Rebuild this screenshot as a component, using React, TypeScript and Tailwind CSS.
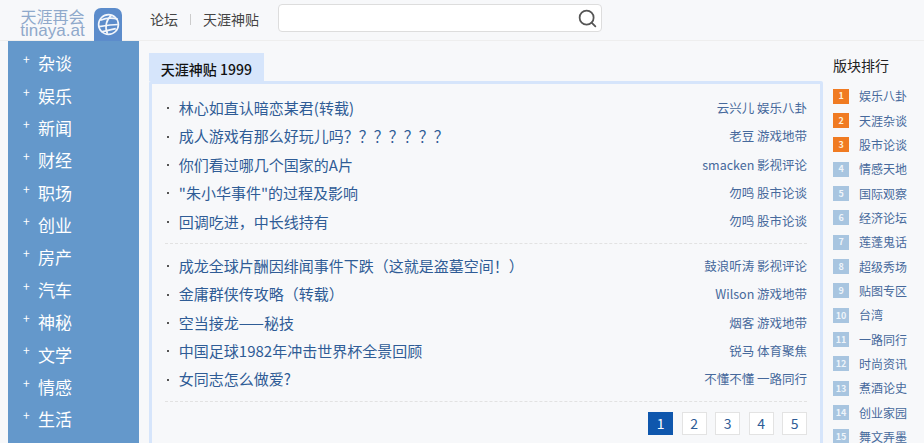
import { Search } from "lucide-react";

const cjk = { fontFamily: '"Noto Sans CJK SC", "Noto Sans", sans-serif' };

const categories = ["杂谈", "娱乐", "新闻", "财经", "职场", "创业", "房产", "汽车", "神秘", "文学", "情感", "生活"];

const topPosts = [
  ["林心如直认暗恋某君(转载)", "云兴儿 娱乐八卦"],
  ["成人游戏有那么好玩儿吗？？？？？？？", "老豆 游戏地带"],
  ["你们看过哪几个国家的A片", "smacken 影视评论"],
  ['"朱小华事件"的过程及影响', "勿鸣 股市论谈"],
  ["回调吃进，中长线持有", "勿鸣 股市论谈"],
];

const bottomPosts = [
  ["成龙全球片酬因绯闻事件下跌（这就是盗墓空间！）", "鼓浪听涛 影视评论"],
  ["金庸群侠传攻略（转载）", "Wilson 游戏地带"],
  ["空当接龙——秘技", "烟客 游戏地带"],
  ["中国足球1982年冲击世界杯全景回顾", "锐马 体育聚焦"],
  ["女同志怎么做爱?", "不懂不懂 一路同行"],
];

const boards = [
  "娱乐八卦", "天涯杂谈", "股市论谈", "情感天地", "国际观察",
  "经济论坛", "莲蓬鬼话", "超级秀场", "贴图专区", "台湾",
  "一路同行", "时尚资讯", "煮酒论史", "创业家园", "舞文弄墨",
];

function PostRow({ title, meta }: { title: string; meta: string }) {
  return (
    <div className="flex h-[28.4px] items-center justify-between">
      <div className="flex items-center">
        <span className="ml-[2px] mr-[10px] h-[2px] w-[2px] bg-[#555]" />
        <span className="text-[15px] text-[#2f5c96]">{title}</span>
      </div>
      <span className="text-[12.5px] text-[#46699c]">{meta}</span>
    </div>
  );
}

export default function App() {
  return (
    <div className="h-[443px] w-[924px] overflow-hidden bg-[#f7f8fa]" style={cjk}>
      {/* top bar */}
      <header className="flex h-[41px] items-start border-b border-[#eeeeee]">
        <div className="ml-[20px] mt-[7px] flex w-[65px] flex-col items-center leading-none text-[#8fa9cb]">
          <span className="text-[16px] leading-[19px]">天涯再会</span>
          <span className="mt-[-3px] text-[17px] leading-[15px]" style={{ fontFamily: '"Liberation Sans", sans-serif' }}>
            tinaya.at
          </span>
        </div>
        <div className="ml-[9px] mt-[8px] flex h-[33px] w-[28px] items-center justify-center rounded-t-[7px] bg-[#5c8ccb]">
          <svg viewBox="0 0 24 24" className="h-[25px] w-[25px]" fill="none" stroke="#f3f6fb" strokeWidth="1.6">
            <circle cx="12" cy="12" r="9.5" />
            <path d="M4 8c5-2 11-3 17-1M3 14c6-1 12-2 18-2M5 19c5-1 10-2 14-3" />
            <path d="M15 3c-5 4-7 11-4 18" />
          </svg>
        </div>
        <nav className="ml-[28px] mt-[9px] flex items-center text-[14px] leading-[20px] text-[#444]">
          <span>论坛</span>
          <span className="mx-[12px] h-[11px] w-px bg-[#ccc]" />
          <span>天涯神贴</span>
        </nav>
        <div className="ml-[19px] mt-[4px] flex h-[28px] w-[324px] items-center justify-end rounded-[4px] border border-[#dddddd] bg-white pr-[3px]">
          <Search size={21} strokeWidth={2} className="text-[#555]" />
        </div>
      </header>

      <div className="flex pl-[8px]">
        {/* left categories */}
        <aside className="h-[402px] w-[131px] bg-[#6498cb] pt-[6px]">
          {categories.map((name) => (
            <div key={name} className="flex h-[32.35px] items-center text-white">
              <span className="ml-[15px] mt-[-8px] w-[15px] text-[12px] leading-none">+</span>
              <span className="text-[17px]">{name}</span>
            </div>
          ))}
        </aside>

        {/* post list */}
        <main className="ml-[10px] mt-[12px] w-[675px]">
          <div className="flex h-[28px] w-[115px] items-center justify-center bg-[#d6e5fb] pt-[4px] text-[14px] font-medium text-[#111]">
            天涯神贴 1999
          </div>
          <div className="h-[400px] rounded-[2px] border-[3px] border-[#d6e5fb] px-[13px] pt-[10px]">
            <div className="border-b border-dashed border-[#e2e2e2] pb-[7px]">
              {topPosts.map(([title, meta]) => (
                <PostRow key={title} title={title} meta={meta} />
              ))}
            </div>
            <div className="border-b border-dashed border-[#e2e2e2] pb-[7px] pt-[8px]">
              {bottomPosts.map(([title, meta]) => (
                <PostRow key={title} title={title} meta={meta} />
              ))}
            </div>
            <div className="mt-[10px] flex justify-end gap-[8.5px]">
              {[1, 2, 3, 4, 5].map((n) => (
                <span
                  key={n}
                  className={
                    n === 1
                      ? "flex h-[23px] w-[25px] items-center justify-center bg-[#0f57ad] text-[14px] text-white"
                      : "flex h-[23px] w-[25px] items-center justify-center border border-[#e3e3e3] bg-white text-[14px] text-[#2f5c96]"
                  }
                >
                  {n}
                </span>
              ))}
            </div>
          </div>
        </main>

        {/* board ranking */}
        <aside className="ml-[10px] w-[91px] pt-[13px]">
          <div className="h-[30px] text-[14px] leading-[22px] text-[#222]">版块排行</div>
          {boards.map((name, i) => (
            <div key={name} className="flex h-[24.35px] items-center">
              <span
                className={
                  i < 3
                    ? "flex h-[15px] w-[16px] items-center justify-center bg-[#f07b22] text-[9px] font-bold text-[#fff0d8]"
                    : "flex h-[15px] w-[16px] items-center justify-center bg-[#a8c5e0] text-[9px] font-bold text-[#eef4fa]"
                }
              >
                {i + 1}
              </span>
              <span className="ml-[10px] whitespace-nowrap text-[12px] text-[#46699c]">{name}</span>
            </div>
          ))}
        </aside>
      </div>
    </div>
  );
}
